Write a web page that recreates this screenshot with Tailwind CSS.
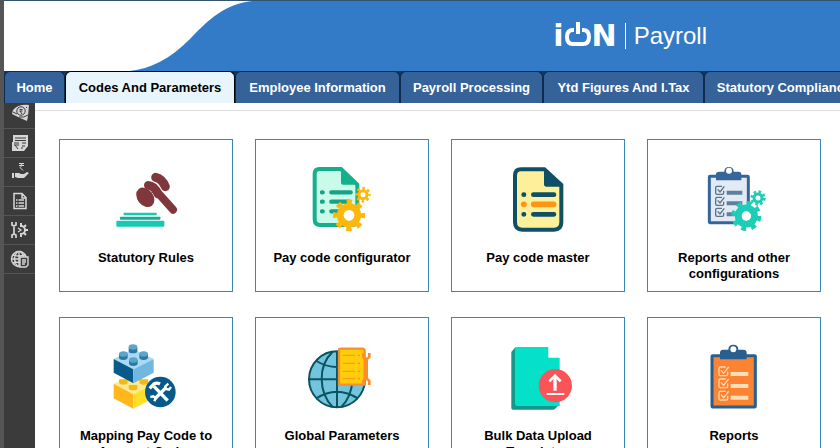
<!DOCTYPE html>
<html lang="en">
<head>
<meta charset="utf-8">
<meta name="viewport" content="width=device-width, initial-scale=1">
<title>iON Payroll</title>
<script src="https://cdn.jsdelivr.net/npm/@tailwindcss/browser@4"></script>
</head>
<body class="flex h-screen flex-col overflow-hidden border-l-4 border-[#555] bg-white font-['Liberation_Sans',Arial,sans-serif] text-[13px] leading-4 text-black">

<header class="flex h-[71px] shrink-0 border-t border-[#34536f] bg-[#337bc6]">
  <svg class="h-[70px] w-[248px] shrink-0" viewBox="4 1 248 70" aria-hidden="true">
    <path fill="#fff" d="M4 1H252C225 4 208 20 190 39C170 59 150 69 130 71H4Z"/>
  </svg>
  <div class="flex grow items-center justify-end pr-[133px] text-white">
    <div class="flex items-end gap-px pr-2">
      <span class="font-['DejaVu_Sans',sans-serif] text-[30px] leading-7 font-bold">i</span>
      <svg class="h-7 w-[26px]" viewBox="0 0 26 28" fill="none" stroke="#fff" stroke-width="4" aria-hidden="true">
        <path d="M9 8H8Q2 8 2 15T8 22H18Q24 22 24 15T18 8H17"/>
        <path d="M13 0V12"/>
      </svg>
      <span class="font-['DejaVu_Sans',sans-serif] text-[30px] leading-7 font-bold">N</span>
    </div>
    <h1 class="border-l border-white pl-2 text-2xl leading-[26px]">Payroll</h1>
  </div>
</header>

<nav class="flex h-8 shrink-0 overflow-hidden bg-[#123660] font-bold text-white" aria-label="Modules">
  <a href="#" class="flex w-[61px] shrink-0 items-center justify-center rounded-t-md border border-b-0 border-[#0d2c50] bg-[#346299]">Home</a>
  <a href="#" aria-current="page" class="flex w-[170px] shrink-0 items-center justify-center rounded-t-md border border-b-0 border-black bg-[#e8f5fd] text-black">Codes And Parameters</a>
  <a href="#" class="flex w-[165px] shrink-0 items-center justify-center rounded-t-md border border-b-0 border-[#0d2c50] bg-[#346299]">Employee Information</a>
  <a href="#" class="flex w-[143px] shrink-0 items-center justify-center rounded-t-md border border-b-0 border-[#0d2c50] bg-[#346299]">Payroll Processing</a>
  <a href="#" class="flex w-[161px] shrink-0 items-center justify-center rounded-t-md border border-b-0 border-[#0d2c50] bg-[#346299]">Ytd Figures And I.Tax</a>
  <a href="#" class="flex w-40 shrink-0 items-center justify-center rounded-t-md border border-b-0 border-[#0d2c50] bg-[#346299]">Statutory Compliance</a>
</nav>

<div class="flex min-h-0 grow">
  <aside class="flex w-[31px] shrink-0 flex-col bg-[#3b3b3b] text-[#d6d6d6]">
    <a href="#" aria-label="Payments" class="flex h-[26px] items-start justify-center border-b border-[#555]">
      <svg class="h-5 w-5" viewBox="0 0 20 20" fill="none" stroke="currentColor"><path fill="currentColor" stroke="none" d="M3 7Q8 1 19 2L18 13L17 18L8 14L2 11Z"/><circle cx="11" cy="8" r="4.200" stroke="#3b3b3b"/><path stroke="#3b3b3b" d="M9.500 6.500h3M9.500 8h3M10 8l2 3M3 9l4 2M9 14q5 1 9-2M16 4l1 1"/></svg>
    </a>
    <a href="#" aria-label="Pay slips" class="flex h-[29px] items-center justify-center border-b border-[#555]">
      <svg class="h-5 w-5" viewBox="0 0 20 20" fill="none" stroke="#3b3b3b"><path fill="#d6d6d6" stroke="none" d="M3 2H18V13L14 18H2V9H3Z"/><path d="M5 5h11M5 7.500h11M4 10h5M4 12h5M5 12l3 4M12 10h4M12 13h3M11 15h2"/></svg>
    </a>
    <a href="#" aria-label="Loans" class="flex h-[29px] items-center justify-center border-b border-[#555]">
      <svg class="h-5 w-5" viewBox="0 0 20 20" fill="none" stroke="currentColor"><path d="M9 1.500h5M9 3.500h5M10 1.500q4 1 0 4l3 3"/><path fill="currentColor" stroke="none" d="M2 11h2v5H2zM5 11h4l2 1h3l3-2 2 1-5 5H8l-3-1z"/></svg>
    </a>
    <a href="#" aria-label="Documents" class="flex h-[29px] items-center justify-center border-b border-[#555]">
      <svg class="h-5 w-5" viewBox="0 0 20 20" fill="none" stroke="currentColor" stroke-width="1.500"><path d="M4 2.500h8l4 4v11H4zM12 3v4h4M6 9h1.500M6 12h1.500M6 15h1.500M8.500 9H14M8.500 12H14M8.500 15H14"/></svg>
    </a>
    <a href="#" aria-label="Settings" class="flex h-[29px] items-center justify-center border-b border-[#555]">
      <svg class="h-5 w-5" viewBox="0 0 20 20" fill="none" stroke="currentColor"><path stroke-width="1.700" d="M2 2v3l2 1 2-1V2M4 6v8M2 18v-3l2-1 2 1v3"/><path stroke-width="2" d="M11 6a4 4 0 0 1 0 8M11 3v4M11 13v4M14 7l2-2M14 13l2 2M15 10h3"/><path stroke-width="1.300" d="M8 8l3 2-3 2"/></svg>
    </a>
    <a href="#" aria-label="Global reports" class="flex h-[29px] items-center justify-center border-b border-[#555]">
      <svg class="h-5 w-5" viewBox="0 0 20 20" fill="none" stroke="currentColor" stroke-width="1.400"><circle cx="9" cy="10" r="7.500"/><path d="M9 2v16M2 10h14M3 6q6 2 12 0M3 14q6-2 12 0M8 2Q1 10 8 18M10 2q4 4 4 8"/><path fill="#3b3b3b" d="M10 8h8v8l-2 2h-6zM12 11h4M12 13h4M12 15h3"/></svg>
    </a>
  </aside>

  <main class="min-w-0 grow pt-[7px]">
    <ul class="grid grid-cols-4 gap-x-[22px] gap-y-[25px] border-t border-[#dcdcdc] pt-7 pr-[19px] pl-6 text-center font-bold">
      <li><a href="#" class="flex h-[153px] flex-col items-center gap-5 border border-[#3988b3] px-3 pt-[26px]">
        <svg class="size-16 shrink-0 overflow-visible" viewBox="42 18 192 192" aria-hidden="true">
          <g fill="none" stroke="#80373c" stroke-linecap="round"><path stroke-width="27" d="M167 52Q187 57 196 80"/><path stroke-width="26" d="M145 76Q163 77 174 102"/><path stroke-width="24" d="M168 92L219 149"/></g>
          <ellipse cx="136" cy="112" rx="24" ry="32" transform="rotate(-38 136 112)" fill="#80373c"/>
          <g fill="#17c9b1"><rect x="71" y="158" width="99" height="8" rx="2"/><rect x="60" y="170" width="121" height="9" rx="2" fill="#18a998"/><rect x="49" y="182" width="144" height="18" rx="3"/></g>
        </svg>
        <span>Statutory Rules</span></a></li>

      <li><a href="#" class="flex h-[153px] flex-col items-center gap-5 border border-[#3988b3] px-3 pt-[26px]">
        <svg class="size-16 shrink-0 overflow-visible" viewBox="45 33 192 192" aria-hidden="true">
          <path d="M73 42H138L187 89V193Q187 210 171 210H75Q59 210 59 193V57Q59 42 73 42Z" fill="#cafbea" stroke="#16af8c" stroke-width="12"/>
          <path d="M138 40L191 89H144Q138 89 138 83Z" fill="#16af8c"/>
          <g stroke="#16a383" stroke-width="13" stroke-linecap="round"><path d="M81 112h2M109 112h58M81 140h2M109 140h53M81 169h2M109 169h20"/></g>
          <circle cx="162" cy="181" r="26" fill="none" stroke="#fdb80d" stroke-width="21"/>
          <circle cx="162" cy="181" r="41" fill="none" stroke="#fdb80d" stroke-width="14" pathLength="16" stroke-dasharray="1 1" stroke-dashoffset=".5"/>
          <circle cx="204" cy="119" r="12" fill="none" stroke="#fdb80d" stroke-width="9"/>
          <circle cx="204" cy="119" r="19" fill="none" stroke="#fdb80d" stroke-width="9" pathLength="16" stroke-dasharray="1 1" stroke-dashoffset=".5"/>
          <circle cx="162" cy="181" r="16" fill="#fff"/>
        </svg>
        <span>Pay code configurator</span></a></li>

      <li><a href="#" class="flex h-[153px] flex-col items-center gap-5 border border-[#3988b3] px-3 pt-[26px]">
        <svg class="size-16 shrink-0 overflow-visible" viewBox="33 33 192 192" aria-hidden="true">
          <path d="M78 43H148L199 90V202Q199 224 177 224H82Q60 224 60 202V62Q60 43 78 43Z" fill="#fdf09b" stroke="#0f5068" stroke-width="12"/>
          <path d="M147 40L205 95H153Q147 95 147 88Z" fill="#0f5068"/>
          <g stroke="#0f5068" stroke-width="14" stroke-linecap="round"><path d="M86 119h1M115 119h62M86 178h1M115 178h62"/><path stroke="#fd9517" stroke-width="17" d="M86 148h1M116 148h60"/></g>
        </svg>
        <span>Pay code master</span></a></li>

      <li><a href="#" class="flex h-[153px] flex-col items-center gap-5 border border-[#3988b3] px-3 pt-[26px]">
        <svg class="size-16 shrink-0 overflow-visible" viewBox="36 33 192 192" aria-hidden="true">
          <rect x="58" y="64" width="117" height="139" rx="2" fill="#e2eaf3" stroke="#35669b" stroke-width="9"/>
          <path d="M78 76V58Q78 50 88 50H103Q103 36 117 36T131 50H146Q154 50 154 58V76Z" fill="#35669b"/><circle cx="117" cy="47" r="9" fill="#fff"/>
          <path d="M110 113h47M110 145h47M110 178h40" stroke="#5f7f9f" stroke-width="12"/>
          <g fill="none" stroke="#58738b" stroke-width="4"><path d="M96 94H81Q77 94 77 98V114Q77 118 81 118H97Q101 118 101 114V107M83 103l7 8 13-17M96 127H81Q77 127 77 131V147Q77 151 81 151H97Q101 151 101 147V140M83 136l7 8 13-17M96 160H81Q77 160 77 164V180Q77 184 81 184H97Q101 184 101 180V173M83 169l7 8 13-17"/></g>
          <circle cx="169" cy="183" r="24" fill="none" stroke="#1ccdb7" stroke-width="21"/>
          <circle cx="169" cy="183" r="38" fill="none" stroke="#1ccdb7" stroke-width="14" pathLength="16" stroke-dasharray="1 1"/>
          <circle cx="169" cy="183" r="14" fill="#fff"/>
          <circle cx="204" cy="129" r="12" fill="none" stroke="#1ccdb7" stroke-width="9"/>
          <circle cx="204" cy="129" r="19" fill="none" stroke="#1ccdb7" stroke-width="8" pathLength="16" stroke-dasharray="1 1"/>
        </svg>
        <span>Reports and other configurations</span></a></li>

      <li><a href="#" class="flex h-[153px] flex-col items-center gap-5 border border-[#3988b3] px-3 pt-[26px]">
        <svg class="size-16 shrink-0 overflow-visible" viewBox="42 27 192 192" aria-hidden="true">
          <path d="M41 146L100 120 161 146 100 178Z" fill="#ffe993"/><path d="M41 146L100 178V221L41 190Z" fill="#ffb719"/><path d="M100 178L161 146V190L100 221Z" fill="#ffdf27"/>
          <g fill="#f5b914"><path d="M57 133h26v8a13 8 0 0 1-26 0zM86 150h26v8a13 8 0 0 1-26 0zM118 133h26v8a13 8 0 0 1-26 0z"/></g>
          <path d="M41 72L100 42 161 72 100 103Z" fill="#a9d9f5"/><path d="M41 72L100 103V145L41 113Z" fill="#075a8c"/><path d="M100 103L161 72V113L100 145Z" fill="#72b7df"/>
          <g fill="#2c789f"><path d="M86 37h26v10a13 8 0 0 1-26 0zM57 57h26v10a13 8 0 0 1-26 0zM118 57h26v10a13 8 0 0 1-26 0zM87 75h26v10a13 8 0 0 1-26 0z"/></g>
          <g fill="#5ba5ca"><ellipse cx="99" cy="36" rx="13" ry="8"/><ellipse cx="70" cy="57" rx="13" ry="8"/><ellipse cx="131" cy="57" rx="13" ry="8"/><ellipse cx="100" cy="75" rx="13" ry="8"/></g>
          <circle cx="181" cy="171" r="46" fill="#07598a"/>
          <g fill="none" stroke="#fff"><path stroke-width="10" d="M162 154L203 197M164 192L198 158"/><path stroke-width="10" d="M149 160L163 146Q171 142 180 147"/><path stroke-width="7" d="M205 146L196 154 198 162 207 164 213 156M151 186L160 184 167 190 163 199"/></g>
        </svg>
        <span>Mapping Pay Code to Account Codes</span></a></li>

      <li><a href="#" class="flex h-[153px] flex-col items-center gap-5 border border-[#3988b3] px-3 pt-[26px]">
        <svg class="size-16 shrink-0 overflow-visible" viewBox="45 27 192 192" aria-hidden="true">
          <g fill="none" stroke="#0c5360" stroke-width="6"><circle cx="126" cy="133" r="84" fill="#72c5dd"/><path d="M126 49V217M42 133H210M64 78Q94 96 126 96T188 78M64 190Q94 170 126 170T188 190M113 50Q79 82 80 133T113 216M139 50Q173 82 172 133T139 216"/></g>
          <path d="M135 41H202Q209 41 209 48V149H132V45Q132 41 135 41Z" fill="#ffce0a" stroke="#fb8e2c" stroke-width="7"/>
          <path d="M145 61h34M145 85h34M145 109h34M145 131h34" stroke="#fb9a1d" stroke-width="4" stroke-linecap="round"/><path d="M189 61h5M189 85h5M189 109h5M189 131h5" stroke="#fb8e2c" stroke-width="5"/>
          <path d="M214 70V132" stroke="#fb8e2c" stroke-width="10"/>
          <path d="M205 54V66Q214 77 223 66V54M205 150V138Q214 127 223 138V150" fill="none" stroke="#fb8e2c" stroke-width="8"/>
        </svg>
        <span>Global Parameters</span></a></li>

      <li><a href="#" class="flex h-[153px] flex-col items-center gap-5 border border-[#3988b3] px-3 pt-[26px]">
        <svg class="size-16 shrink-0 overflow-visible" viewBox="33 27 192 192" aria-hidden="true">
          <path d="M61 37L49 51V219Q49 224 54 224H177L193 209Z" fill="#13988a"/>
          <path d="M63 36H160V68H194V213H67Q60 213 60 205V39Q60 36 63 36Z" fill="#04e1c8"/>
          <circle cx="181" cy="152" r="50" fill="#fa5458"/>
          <g fill="none" stroke="#fff"><path stroke-width="10" d="M180 167V124"/><path stroke-width="8" d="M163 139L180 122 197 139"/><path stroke-width="6" d="M155 177H208"/></g>
        </svg>
        <span>Bulk Data Upload Templates</span></a></li>

      <li><a href="#" class="flex h-[153px] flex-col items-center gap-5 border border-[#3988b3] px-3 pt-[26px]">
        <svg class="size-16 shrink-0 overflow-visible" viewBox="36 27 192 192" aria-hidden="true">
          <rect x="66" y="62" width="130" height="154" rx="2" fill="#fc8332" stroke="#285f8f" stroke-width="9"/>
          <path d="M90 73V53Q90 44 100 44H115Q115 29 130 29T145 44H160Q170 44 170 53V73Z" fill="#285f8f"/><circle cx="130" cy="43" r="9" fill="#fff"/>
          <path d="M122 117h53M122 153h53M122 188h53" stroke="#ffddb9" stroke-width="12"/>
          <g fill="none" stroke="#ffddb9" stroke-width="4"><path d="M107 96H91Q87 96 87 100V118Q87 122 91 122H109Q113 122 113 118V110M93 106l8 9 15-19M107 132H91Q87 132 87 136V154Q87 158 91 158H109Q113 158 113 154V146M93 142l8 9 15-19M107 169H91Q87 169 87 173V191Q87 195 91 195H109Q113 195 113 191V183M93 179l8 9 15-19"/></g>
        </svg>
        <span>Reports</span></a></li>
    </ul>
  </main>
</div>
</body>
</html>
